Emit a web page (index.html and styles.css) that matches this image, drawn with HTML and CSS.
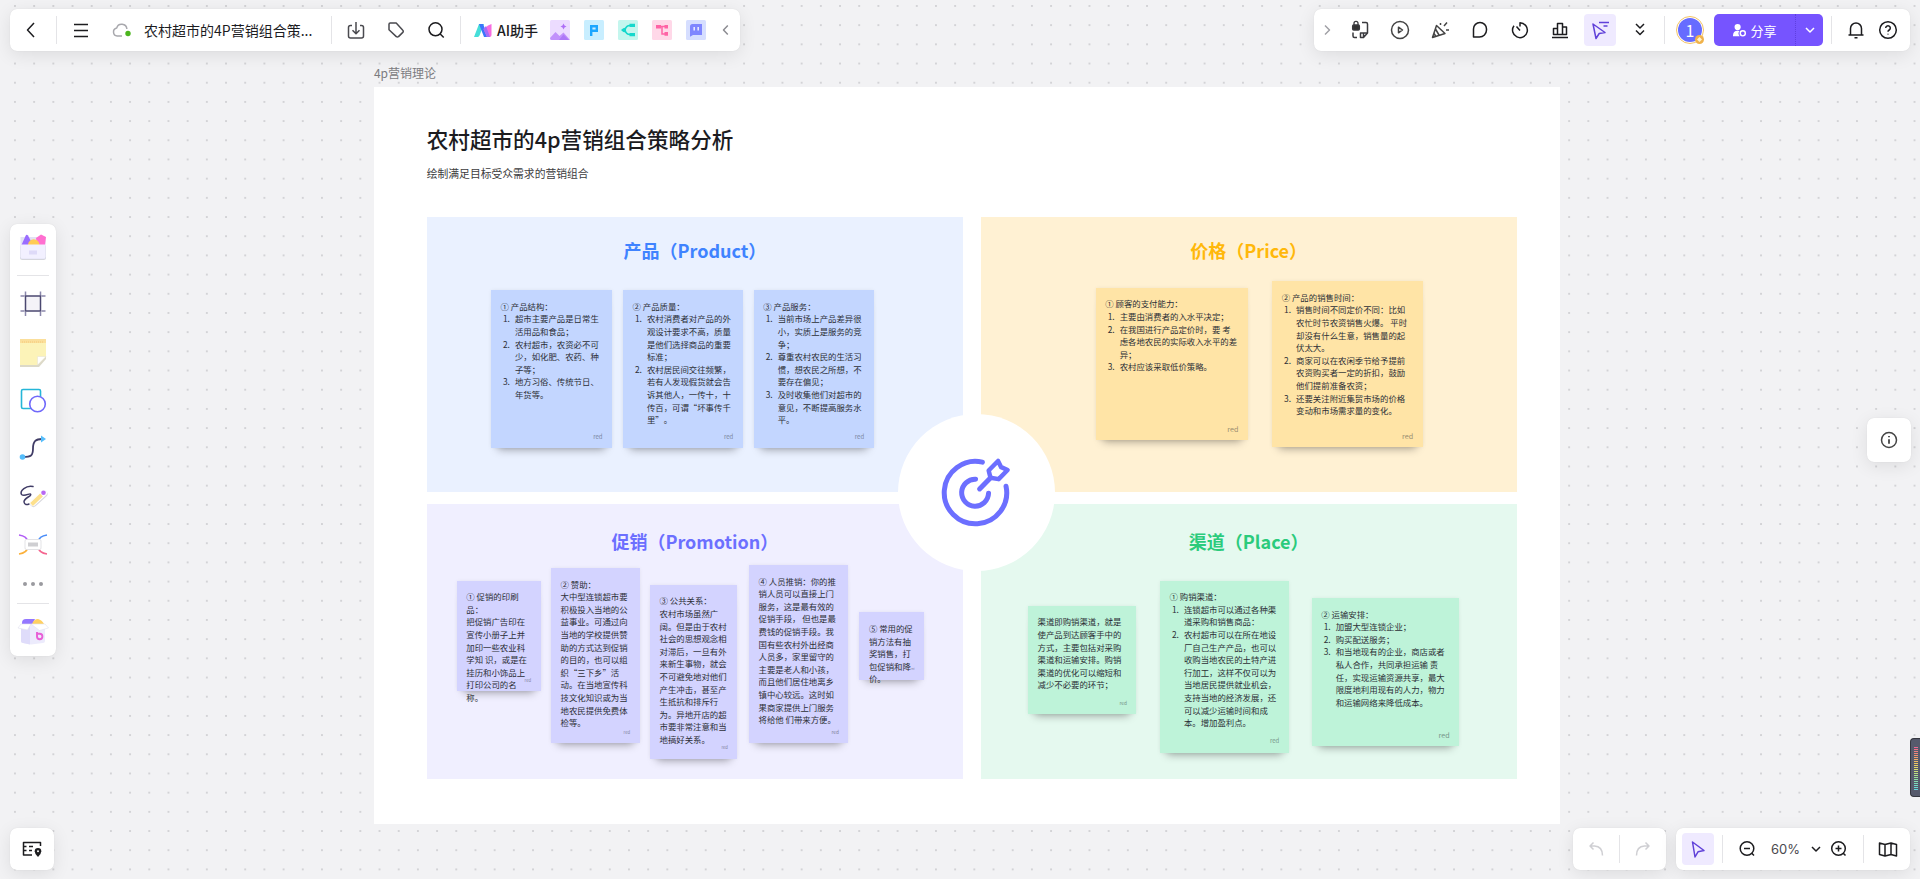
FILE: index.html
```html
<!DOCTYPE html>
<html lang="zh-CN">
<head>
<meta charset="utf-8">
<title>农村超市的4P营销组合策略</title>
<link rel="stylesheet" href="styles.css">
</head>
<body>
<main class="canvas">
  <div class="board">
    <p class="board-label">4p营销理论</p>
    <article class="frame">
      <h1 class="frame-title">农村超市的4p营销组合策略分析</h1>
      <p class="frame-subtitle">绘制满足目标受众需求的营销组合</p>
      <div class="panels">
        <section class="panel product">
          <h2>产品（Product）</h2>
          <div class="note n-product-1">
            <p>① 产品结构：</p>
            <ol><li>超市主要产品是日常生活用品和食品；</li><li>农村超市，农资必不可少，如化肥、农药、种子等；</li><li>地方习俗、传统节日、年货等。</li></ol>
            <span class="author s10">red</span>
          </div>
          <div class="note n-product-2">
            <p>② 产品质量：</p>
            <ol><li>农村消费者对产品的外观设计要求不高，质量是他们选择商品的重要标准；</li><li>农村居民间交往频繁，若有人发现假货就会告诉其他人，一传十，十传百，可谓“坏事传千里”。</li></ol>
            <span class="author s10">red</span>
          </div>
          <div class="note n-product-3">
            <p>③ 产品服务：</p>
            <ol><li>当前市场上产品差异很小，实质上是服务的竞争；</li><li>尊重农村农民的生活习惯，想农民之所想，不要存在偏见；</li><li>及时收集他们对超市的意见，不断提高服务水平。</li></ol>
            <span class="author s10">red</span>
          </div>
        </section>
        <section class="panel price">
          <h2>价格（Price）</h2>
          <div class="note n-price-1">
            <p>① 顾客的支付能力：</p>
            <ol><li>主要由消费者的入水平决定；</li><li>在我国进行产品定价时，要 考虑各地农民的实际收入水平的差异；</li><li>农村应该采取低价策略。</li></ol>
            <span class="author s12">red</span>
          </div>
          <div class="note n-price-2">
            <p>② 产品的销售时间：</p>
            <ol><li>销售时间不同定价不同：比如农忙时节农资销售火爆。 平时却没有什么生意，销售量的起伏太大。</li><li>商家可以在农闲季节给予提前农资购买者一定的折扣，鼓励他们提前准备农资；</li><li>还要关注附近集贸市场的价格变动和市场需求量的变化。</li></ol>
            <span class="author s12">red</span>
          </div>
        </section>
        <section class="panel promotion">
          <h2>促销（Promotion）</h2>
          <div class="note n-promo-1">
            <p>① 促销的印刷品：</p>
            <p>把促销广告印在宣传小册子上并加印一些农业科学知 识，或是在挂历和小饰品上打印公司的名称。</p>
            <span class="author s7">red</span>
          </div>
          <div class="note n-promo-2">
            <p>② 赞助：</p>
            <p>大中型连锁超市要积极投入当地的公益事业。可通过向当地的学校提供赞助的方式达到促销的目的，也可以组织“三下乡”活动。在当地宣传科技文化知识或为当地农民提供免费体检等。</p>
            <span class="author s7">red</span>
          </div>
          <div class="note n-promo-3">
            <p>③ 公共关系：</p>
            <p>农村市场虽然广阔。但是由于农村社会的思想观念相对滞后，一旦有外来新生事物，就会不可避免地对他们产生冲击，甚至产生抵抗和排斥行为。异地开店的超市要非常注意和当地搞好关系。</p>
            <span class="author s7">red</span>
          </div>
          <div class="note n-promo-4">
            <p>④ 人员推销：你的推销人员可以直接上门服务，这是最有效的促销手段， 但也是最费钱的促销手段。我国有些农村外出经商人员多，家里留守的主要是老人和小孩，而且他们居住地离乡镇中心较远。这时如果商家提供上门服务将给他 们带来方便。</p>
            <span class="author s8">red</span>
          </div>
          <div class="note n-promo-5">
            <p>⑤ 常用的促销方法有抽奖销售，打包促销和降价。</p>
            <span class="author s4">red</span>
          </div>
        </section>
        <section class="panel place">
          <h2>渠道（Place）</h2>
          <div class="note n-place-1">
            <p>渠道即购销渠道，就是使产品到达顾客手中的方式，主要包括对采购渠道和运输安排。购销渠道的优化可以缩短和减少不必要的环节；</p>
            <span class="author s8">red</span>
          </div>
          <div class="note n-place-2">
            <p>① 购销渠道：</p>
            <ol><li>连锁超市可以通过各种渠道采购和销售商品：</li><li>农村超市可以在所在地设厂自己生产产品，也可以收购当地农民的土特产进行加工，这样不仅可以为当地居民提供就业机会，支持当地的经济发展，还可以减少运输时间和成本。增加盈利点。</li></ol>
            <span class="author s10">red</span>
          </div>
          <div class="note n-place-3">
            <p>② 运输安排：</p>
            <ol><li>加盟大型连锁企业；</li><li>购买配送服务；</li><li>和当地现有的企业，商店或者私人合作，共同承担运输 责任，实现运输资源共享，最大限度地利用现有的人力，物力和运输网络来降低成本。</li></ol>
            <span class="author s12">red</span>
          </div>
        </section>
        <div class="hub">
          <svg viewBox="0 0 92 92" fill="none" stroke="#6c6fff" stroke-width="5" stroke-linecap="round" stroke-linejoin="round"><path d="M52.500 16.200A31.300 31.300 0 1 0 76.200 40.300"/><path d="M45.700 33.300A13.500 13.500 0 1 0 58.700 47.300"/><path d="M49.700 43L61 31.600"/><path d="M58.800 24.600L68.200 15L71.300 21.200L77.800 24L68.800 33.200L60.600 31.800Z" stroke-width="4.500"/></svg>
        </div>
      </div>
    </article>
  </div>
</main>

<header class="bar bar-file">
  <button class="ib back" aria-label="返回"><svg viewBox="0 0 24 24"><path d="M15 5L8.500 12l6.500 7"/></svg></button>
  <i class="sep"></i>
  <button class="ib menu" aria-label="菜单"><svg viewBox="0 0 24 24"><path d="M5 6.500h14M5 12.500h14M5 18.500h14"/></svg></button>
  <span class="cloud"><svg viewBox="0 0 24 24"><path d="M13 18H8.200a4 4 0 0 1-.5-7.900A5.200 5.200 0 0 1 17.900 11" stroke="#a8a8ad"/><circle cx="19" cy="15.500" r="2.700" fill="#4bb51d" stroke="none"/></svg></span>
  <span class="doc-title">农村超市的4P营销组合策...</span>
  <i class="sep"></i>
  <button class="ib" aria-label="下载"><svg viewBox="0 0 24 24" stroke="#4a4a4f"><path d="M8 7.500H6.500a2 2 0 0 0-2 2V18a2 2 0 0 0 2 2h11a2 2 0 0 0 2-2V9.500a2 2 0 0 0-2-2H16M12 4v11.500M8.500 12.200l3.500 3.500 3.500-3.500"/></svg></button>
  <button class="ib" aria-label="标签"><svg viewBox="0 0 24 24" stroke="#4a4a4f"><path d="M5 6.200Q5 5 6.200 5h6l6.600 7.200a1.500 1.500 0 0 1 0 2.200L14.500 18.600a1.500 1.500 0 0 1-2.200 0L5 11.800Z"/></svg></button>
  <button class="ib search" aria-label="搜索"><svg viewBox="0 0 24 24"><circle cx="11.500" cy="11.300" r="6.500"/><path d="M16.200 16l3.500 3.500"/></svg></button>
  <i class="sep"></i>
  <button class="ai"><svg class="ai-logo" viewBox="0 0 18 13"><path d="M5 0h5L5.500 11.500A2 2 0 0 1 3.700 13H0Z" fill="#46ded9"/><path d="M5 0h4l5.500 13H10Z" fill="#3a76fb"/><path d="M17.500 0v11q0 2-2 2H13L9.500 5 14 1.500Z" fill="#f76ce0"/><path d="M9.500 5l2.500-3L16 13h-3Z" fill="#a36cf8"/></svg><b>AI助手</b></button>
  <div class="ai-tools">
    <button aria-label="AI图片"><svg viewBox="0 0 20 20"><rect width="20" height="20" rx="1.500" fill="#ecdcff"/><path d="M0 18l5.500-6 4 4 4-3.500L20 20H1.500Q0 20 0 18Z" fill="#c191fb"/><path d="M9 20l4.500-5.500L19 20Z" fill="#ad78f7"/><path d="M13.500 3.500l1 2 2 1-2 1-1 2-1-2-2-1 2-1Z" fill="#ae6ff7"/></svg></button>
    <button aria-label="AI演示"><svg viewBox="0 0 20 20"><rect width="20" height="20" rx="1.500" fill="#c8eeff"/><path d="M7.200 16V6.200h5.600v4.600H7.200" fill="none" stroke="#1ba6ff" stroke-width="2.400"/></svg></button>
    <button aria-label="AI思维导图"><svg viewBox="0 0 20 20"><rect width="20" height="20" rx="1.500" fill="#c4f6ee"/><path d="M12 5.500Q8 5.500 7 10q1 4.500 5 4.500" fill="none" stroke="#14d8cc" stroke-width="1.600"/><path d="M3 10q2-2.500 5-2.500v5Q5 12.500 3 10ZM11.500 3.700H17v3.400h-5.500ZM11.500 12.900H17v3.400h-5.500Z" fill="#14d8cc"/></svg></button>
    <button aria-label="AI流程图"><svg viewBox="0 0 20 20"><rect width="20" height="20" rx="1.500" fill="#ffd8e8"/><path d="M6 6.500h8M10 6.500v7.500h4" fill="none" stroke="#ff63a5" stroke-width="1.500"/><path d="M4 5h5v3.500H4ZM12.500 5H16v3.500h-3.500ZM12.500 12H16v3.700h-3.500Z" fill="#ff63a5"/></svg></button>
    <button aria-label="AI对话"><svg viewBox="0 0 20 20"><rect width="20" height="20" rx="1.500" fill="#d6deff"/><path d="M6.500 4H16v11H7l-3 1.800V6.500Q4 4 6.500 4Z" fill="#7f86ff"/><path d="M8.200 7v3.500M12.200 7v3.500" stroke="#eef" stroke-width="1.500"/></svg></button>
  </div>
  <button class="ib fold" aria-label="收起"><svg viewBox="0 0 24 24" stroke="#8c8c92"><path d="M13.800 7.500L9.500 12l4.300 4.500"/></svg></button>
</header>

<nav class="bar bar-actions">
  <button class="ib slim" aria-label="展开"><svg viewBox="0 0 24 24" stroke="#a0a0a6"><path d="M10 7.500l4.500 4.500-4.500 4.500"/></svg></button>
  <button class="ib" aria-label="锁定"><svg viewBox="0 0 24 24" stroke="#3a3a3e"><path d="M5 14.500V18q0 1.500 1.500 1.500H9M14 4.500h4Q19.500 4.500 19.500 6v9l-4 4.500h-3V15h7M15.500 19.500V15"/><path d="M6 7V5.300a2 2 0 0 1 4 0V7" stroke-width="1.300"/><rect x="4.700" y="7" width="6.600" height="5" rx="1" fill="#333"/></svg></button>
  <button class="ib" aria-label="演示"><svg viewBox="0 0 24 24" stroke="#444"><circle cx="12" cy="12" r="8.500"/><path d="M10.500 9.200v5.600l4-2.800Z"/></svg></button>
  <button class="ib" aria-label="庆祝"><svg viewBox="0 0 24 24" stroke="#444"><path d="M8.500 7.500L4.500 19.500l12.500-4ZM7.500 11l3.500 6M6 15.500l2 3M12.500 7V5M16 8l3-3.500M18 12h3"/></svg></button>
  <button class="ib" aria-label="评论"><svg viewBox="0 0 24 24"><path d="M5.500 19V11a6.500 6.500 0 0 1 13 0v1a7 7 0 0 1-7 7Z"/></svg></button>
  <button class="ib" aria-label="计时器"><svg viewBox="0 0 24 24"><path d="M12 8.500V4.800a7.400 7.400 0 1 1-6 3M8.500 8.500l3.500 4"/></svg></button>
  <button class="ib" aria-label="投票"><svg viewBox="0 0 24 24"><path d="M4 19.500h16M5.500 16.500V10.500h4v6ZM9.500 16.500v-11h5v11ZM14.500 16.500V9h4v7.500Z"/></svg></button>
  <button class="ib cursors on" aria-label="光标"><svg viewBox="0 0 24 24"><path d="M5 6l12 8.500-5.800 1L8 20.500ZM11 4.500h10M15.500 8h4"/></svg></button>
  <button class="ib" aria-label="更多"><svg viewBox="0 0 24 24"><path d="M8 6l4 4 4-4M8 12.500l4 4 4-4"/></svg></button>
  <i class="sep"></i>
  <span class="avatar">1<svg viewBox="0 0 8 8"><circle cx="4" cy="4" r="4" fill="#f0b24a"/><path d="M4 1.800L6.200 4 4 6.200 1.800 4Z" fill="#fff3d0"/></svg></span>
  <div class="share">
    <button class="share-main"><svg viewBox="0 0 16 16"><circle cx="6" cy="4.300" r="3.300" fill="#fff"/><path d="M1 14q0-5.800 5-5.800 1.200 0 2 .4A4 4 0 0 0 8.200 14Z" fill="#fff"/><circle cx="11.500" cy="11" r="2.700" fill="none" stroke="#fff" stroke-width="1.500"/></svg>分享</button>
    <button class="share-more" aria-label="分享选项"><svg viewBox="0 0 24 24"><path d="M8 10l4 4 4-4"/></svg></button>
  </div>
  <i class="sep"></i>
  <button class="ib help" aria-label="通知"><svg viewBox="0 0 24 24"><path d="M4.500 17h15M6.500 17V10.500a5.500 5.500 0 0 1 11 0V17M10.500 19.800h3"/></svg></button>
  <button class="ib help" aria-label="帮助"><svg viewBox="0 0 24 24"><circle cx="12" cy="12" r="8.300"/><path d="M9.700 10a2.300 2.300 0 1 1 3.500 2q-1.200.7-1.200 1.700M12 15.800v.6"/></svg></button>
</nav>

<aside class="bar rail">
  <button class="tool" aria-label="模板"><svg viewBox="0 0 32 32"><rect x="3" y="12.500" width="26" height="15.500" rx="2.500" fill="#d5d6dc"/><path d="M3.500 5h25v21q0 1-1 1h-23q-1 0-1-1Z" fill="#e2e2f4"/><path d="M4.500 13L8.500 4q1-2 2.500-.5L16 13Z" fill="#9a6dff"/><path d="M19 6l5-3.500 5 2.500-1 8h-8Z" fill="#ff6fd0"/><path d="M11 13a5.700 5.700 0 0 1 11.500 0Z" fill="#ffcb54"/><path d="M3.500 12.500h25v12q0 2-2 2h-21q-2 0-2-2Z" fill="#f2f0ff"/><rect x="12" y="18.500" width="8" height="4" fill="#dedaf8"/></svg></button>
  <i class="rule"></i>
  <button class="tool" aria-label="画框"><svg viewBox="0 0 32 32" fill="none" stroke="#8a87ab" stroke-width="1.500"><path d="M8.500 3.500v4M23.500 3.500v4M8.500 24v4M23.500 24v4M3.500 8h4M3.500 23h4M24.500 8h4M24.500 23h4"/><rect x="8.500" y="8" width="15" height="15" fill="#f4f3f8" stroke="#4b4870"/></svg></button>
  <button class="tool" aria-label="便签"><svg viewBox="0 0 32 32"><path d="M3 4h26v19l-7 8H3Z" fill="#dcd9c8"/><path d="M3 3h26v17l-8.500 9H3Z" fill="#fcf3b8"/><path d="M3 3h26v4H3Z" fill="#fbdf9b"/><path d="M5 6h22" stroke="#f3c978" stroke-width="1" stroke-dasharray="1 1"/><path d="M20.500 29v-8.500H29Z" fill="#fff" stroke="#e5e1cf" stroke-width=".5"/></svg></button>
  <button class="tool" aria-label="形状"><svg viewBox="0 0 32 32" stroke-width="1.600"><rect x="4.500" y="5.500" width="19" height="19" rx="1.500" fill="#fff" stroke="#25b6d8"/><circle cx="20.500" cy="20" r="7.800" fill="#fff" stroke="#7068fa"/></svg></button>
  <button class="tool" aria-label="连线"><svg viewBox="0 0 32 32"><path d="M6 25c8 0 10-1 10-8.500S19 7 25 7" fill="none" stroke="#403c66" stroke-width="1.800"/><circle cx="5.500" cy="25" r="2.800" fill="#55bdfb"/><path d="M24 3.500L29 7l-5 3.500Z" fill="#55bdfb"/></svg></button>
  <button class="tool" aria-label="画笔"><svg viewBox="0 0 32 32" fill="none"><path d="M16 6.500C9 5 2.500 11 4.500 14.500c3 2.500 8-1.500 9-.5 2 2-7 4-6.500 8 .5 3 3 3 5 2" stroke="#403c66" stroke-width="1.500" stroke-linecap="round"/><path d="M16.500 23.500L27 14" stroke="#d9d9de" stroke-width="7" stroke-linecap="round"/><path d="M16 23L27 13" stroke="#fff" stroke-width="6" stroke-linecap="round"/><path d="M14.500 24.500L24.500 15" stroke="#fde08c" stroke-width="4"/><circle cx="26.500" cy="12.800" r="2.300" fill="#b868f2"/></svg></button>
  <button class="tool" aria-label="思维导图"><svg viewBox="0 0 32 32" fill="none" stroke-width="1.600"><path d="M2 7q8 1 9 7" stroke="#b15cf5"/><path d="M30 7q-8 1-9 7" stroke="#4a8df8"/><path d="M2 26q8-1 9-7" stroke="#fbb03a"/><path d="M30 26q-8-1-9-7" stroke="#f4658f"/><rect x="8" y="11.500" width="16" height="10" rx="1.500" fill="#fff" stroke="#e3e3e6" stroke-width="1"/><rect x="11" y="14.500" width="10" height="4" fill="#cfcfd2"/></svg></button>
  <button class="tool short" aria-label="更多工具"><svg viewBox="0 0 32 32" fill="#9a9a9f"><circle cx="8" cy="16" r="2"/><circle cx="16" cy="16" r="2"/><circle cx="24" cy="16" r="2"/></svg></button>
  <i class="rule"></i>
  <button class="tool" aria-label="应用"><svg viewBox="0 0 32 32"><path d="M5 7q0-4 4-4h9l-3 6H5Z" fill="#9477ff"/><path d="M15 8q2-5 6-5 4 1 6 5Z" fill="#ffd061"/><path d="M4 8h24v17q0 2-2 2L14 28.500 6 27q-2 0-2-2Z" fill="#ecebfc"/><path d="M4 11l9-3v20.500L6 27q-2 0-2-2Z" fill="#dfdcfa"/><path d="M4 8h10l-3.500 6L1 12Z" fill="#fff" stroke="#e0e0ee" stroke-width=".6"/><path d="M14 8h14l3.500 4-9 2.500Z" fill="#fff" stroke="#e0e0ee" stroke-width=".6"/><path d="M20 16v4.500a2.700 2.700 0 1 0 2.700-2.700H20" fill="none" stroke="#e85fd6" stroke-width="1.900"/></svg></button>
</aside>

<div class="bar bar-map"><button class="ib" aria-label="导航"><svg viewBox="0 0 24 24"><path d="M12 18H3.500V5.500h17V9M3.500 9.500h3M3.500 13.500h3M9 9.500h4M9 13.500h3"/><path d="M18 11a3.300 3.300 0 0 1 3.300 3.300Q21.300 17 18 20q-3.300-3-3.300-5.700A3.300 3.300 0 0 1 18 11Z" fill="#1c1c1f" stroke="none"/><circle cx="18" cy="14.300" r="1" fill="#fff" stroke="none"/></svg></button></div>

<div class="bar bar-info"><button class="ib" aria-label="信息"><svg viewBox="0 0 24 24" stroke="#444"><circle cx="12" cy="12" r="7.500"/><path d="M12 11.200v4.600M12 8v1.300" stroke-width="1.800"/></svg></button></div>

<div class="bottom-right">
  <div class="bar history">
    <button class="ib" aria-label="撤销"><svg viewBox="0 0 24 24" stroke="#cfcfd3"><path d="M9.500 5.500L6 9l3.500 3.500M6 9h4.500q8 .5 8 9.500"/></svg></button>
    <i class="sep"></i>
    <button class="ib" aria-label="重做"><svg viewBox="0 0 24 24" stroke="#cfcfd3"><path d="M14.500 5.500L18 9l-3.500 3.500M18 9h-4.500q-8 .5-8 9.500"/></svg></button>
  </div>
  <div class="bar zoombar">
    <button class="ib on" aria-label="选择"><svg viewBox="0 0 24 24"><path d="M6.500 5l11.500 8.500-6 1.300-3 5.200Z"/></svg></button>
    <i class="sep"></i>
    <button class="ib" aria-label="缩小"><svg viewBox="0 0 24 24"><circle cx="12" cy="11.500" r="6.800"/><path d="M9 11.500h6M16.500 16l2.500 2.500"/></svg></button>
    <button class="percent">60%<svg viewBox="0 0 24 24"><path d="M8 10l4 4 4-4"/></svg></button>
    <button class="ib" aria-label="放大"><svg viewBox="0 0 24 24"><circle cx="11.500" cy="11.500" r="6.800"/><path d="M8.500 11.500h6M11.500 8.500v6M16 16l2.500 2.500"/></svg></button>
    <i class="sep"></i>
    <button class="ib" aria-label="小地图"><svg viewBox="0 0 24 24"><path d="M3.500 6l5.500 1.500L15 6l5.500 1.500V19L15 17.500 9 19 3.500 17.500ZM9 7.500V19M15 6v11.500"/></svg></button>
  </div>
</div>
<div class="meter"><i></i></div>
</body>
</html>
```
FILE: styles.css
```css
:root {
  --ink: #1c1c1f;
  --accent: #7654ff;
  --zoom: 0.6;
}
* { box-sizing: border-box; }
html, body { height: 100%; }
body {
  margin: 0;
  overflow: hidden;
  position: relative;
  font-family: "Noto Sans CJK SC", "Noto Sans", sans-serif;
  font-size: 14px;
  color: var(--ink);
  background: #f2f2f4;
}
h1, h2, p, ol { margin: 0; padding: 0; font-weight: 400; }
button { border: 0; padding: 0; margin: 0; background: none; font: inherit; color: inherit; cursor: pointer; }
svg { display: block; }

/* canvas */
.canvas {
  height: 100%;
  overflow: hidden;
  display: flex;
  justify-content: center;
  align-items: flex-start;
  padding: 64px 0 0 14px;
  text-spacing-trim: space-all;
  --cell: calc(32px * var(--zoom));
  background-image: conic-gradient(from 270deg at 2px 2px, #d3d3d6 90deg, transparent 0);
  background-size: var(--cell) var(--cell);
  background-position: 14px 5px;
}
.board { zoom: 0.6; flex: none; }
.board-label { font-size: 20px; line-height: 30px; color: #7b7b80; margin-bottom: 8px; }
.frame { width: 1977px; background: #fff; padding: 61px 72px 75px 88px; }
.frame-title { font-size: 36px; line-height: 54px; font-weight: 500; }
.frame-subtitle { font-size: 18px; line-height: 27px; margin-top: 15px; color: #3c3c40; }
.panels {
  position: relative;
  margin-top: 60px;
  display: grid;
  grid-template-columns: 1fr 1fr;
  grid-auto-rows: 458px;
  gap: 20px 29px;
}
.panel { position: relative; padding-top: 34px; text-align: center; }
.panel h2 { font-size: 30px; line-height: 45px; font-weight: 700; }
.product { background: #eaf1ff; }
.price { background: #fff1d3; }
.promotion { background: #f0efff; padding-top: 41px; }
.place { background: #e5f9ef; padding-top: 41px; }
.product h2 { color: #3f83ff; }
.price h2 { color: #ffb80a; }
.promotion h2 { color: #6c6fff; }
.place h2 { color: #2bcb7c; }

.note {
  position: absolute;
  padding: 16px;
  font-size: 14px;
  line-height: 21px;
  text-align: left;
  color: #2c2f36;
  box-shadow: 0 0 6px rgba(0, 0, 0, .06), 0 16px 14px -12px rgba(0, 0, 0, .34);
}
.product .note { background: #c3d6ff; }
.price .note { background: #ffe4a6; }
.promotion .note { background: #d3d3ff; }
.place .note { background: #bef3d9; }
.note ol { list-style: none; padding-left: 24px; counter-reset: item; }
.note li { counter-increment: item; }
.note li::before { content: counter(item) "."; float: left; margin-left: -20px; }
.author { position: absolute; right: 16px; bottom: 8px; opacity: .5; }
.s4 { font-size: 4px; }
.s7 { font-size: 7px; }
.s8 { font-size: 8px; }
.s10 { font-size: 10px; }
.s12 { font-size: 12px; }

.n-product-1 { left: 107px; top: 122px; width: 202px; height: 263px; }
.n-product-2 { left: 327px; top: 122px; width: 200px; height: 263px; }
.n-product-3 { left: 545px; top: 122px; width: 200px; height: 263px; }
.n-price-1 { left: 192px; top: 118px; width: 254px; height: 254px; }
.n-price-2 { left: 486px; top: 107px; width: 251px; height: 277px; }
.n-promo-1 { left: 50px; top: 128px; width: 140px; height: 184px; }
.n-promo-2 { left: 207px; top: 107px; width: 148px; height: 292px; }
.n-promo-3 { left: 372px; top: 135px; width: 146px; height: 290px; }
.n-promo-4 { left: 537px; top: 102px; width: 166px; height: 297px; }
.n-promo-5 { left: 721px; top: 181px; width: 108px; height: 113px; }
.n-place-1 { left: 79px; top: 170px; width: 181px; height: 181px; }
.n-place-2 { left: 299px; top: 128px; width: 215px; height: 287px; }
.n-place-3 { left: 552px; top: 157px; width: 246px; height: 247px; }

.hub {
  position: absolute;
  left: 785px;
  top: 328px;
  width: 262px;
  height: 262px;
  border-radius: 50%;
  background: #fff;
  display: grid;
  place-items: center;
}
.hub svg { width: 153px; height: 153px; }

/* floating bars */
.bar {
  background: #fff;
  border-radius: 7px;
  box-shadow: 0 0 1px rgba(0, 0, 0, .12), 0 4px 18px rgba(0, 0, 0, .09);
  display: flex;
  align-items: center;
}
.bar-file, .bar-actions, .rail, .bar-map, .bar-info, .bottom-right, .meter { position: absolute; }
.sep { width: 1px; height: 28px; background: #e4e4e7; flex: none; }
.ib { width: 40px; height: 32px; display: grid; place-items: center; border-radius: 4px; flex: none; }
.ib svg, .cloud svg, .percent svg, .share-more svg {
  width: 24px;
  height: 24px;
  fill: none;
  stroke-width: 1.5;
  stroke-linejoin: round;
}
.ib svg:not([stroke]), .cloud svg, .percent svg { stroke: var(--ink); }
.on { background: #efeaff; width: 32px; }
.ib.on svg { stroke: #6041d9; }

.bar-file { left: 10px; top: 9px; height: 42px; padding-left: 1px; }
.back { margin-right: 5px; }
.menu { width: 48px; }
.cloud { width: 32px; display: grid; place-items: center; }
.doc-title { margin: 0 17px 0 7px; width: 170px; line-height: 21px; white-space: nowrap; }
.bar-file .sep ~ .sep + .ib { margin-left: 4px; }
.search { margin-right: 4px; }
.ai { display: flex; align-items: center; gap: 5px; margin-left: 13px; line-height: 21px; }
.ai-logo { width: 18px; height: 13px; }
.ai b { font-weight: 500; width: 40px; white-space: nowrap; }
.ai-tools { display: flex; gap: 14px; margin: 0 6px 0 13px; }
.ai-tools button, .ai-tools svg { width: 20px; height: 20px; }
.fold { width: 28px; }

.bar-actions { right: 10px; top: 9px; height: 42px; padding-right: 6px; }
.slim { width: 26px; }
.cursors { margin: 0 4px; }
.bar-actions .sep { margin: 0 8px 0 4px; }
.avatar {
  position: relative;
  width: 28px;
  height: 28px;
  margin: 0 10px 0 3px;
  border-radius: 50%;
  border: 1px solid #f5c465;
  background: #666cff content-box;
  padding: 1px;
  color: #fff;
  font-size: 16px;
  line-height: 24px;
  text-align: center;
}
.avatar svg { position: absolute; right: -1px; bottom: -1px; width: 9px; height: 9px; }
.share { display: flex; height: 32px; border-radius: 5px; background: var(--accent); color: #fff; overflow: hidden; margin-right: 4px; }
.share-main { width: 81px; display: flex; align-items: center; justify-content: center; gap: 3px; font-size: 13px; }
.share-main svg { width: 15px; height: 15px; }
.share-more { width: 28px; display: grid; place-items: center; border-left: 1px dotted #5f3fe0; }
.share-more svg { stroke: #fff; }
.help { width: 32px; }

.rail { left: 10px; top: 224px; width: 46px; flex-direction: column; }
.tool { width: 46px; height: 48px; display: grid; place-items: center; }
.tool svg { width: 32px; height: 32px; }
.rule { width: 32px; height: 1px; background: #e4e4e7; margin: 3px 0 4px; }
.short { height: 32px; }

.bar-map { left: 10px; bottom: 9px; width: 44px; height: 42px; justify-content: center; }
.bar-info { right: 9px; top: 418px; width: 44px; height: 44px; justify-content: center; }
.bottom-right { right: 10px; bottom: 9px; display: flex; gap: 10px; }
.history { height: 42px; padding: 0 3px; }
.history .sep { margin: 0 3px; }
.zoombar { height: 42px; padding: 0 2px 0 6px; }
.zoombar .sep { margin: 0 4px 0 8px; }
.zoombar .sep ~ .sep { margin: 0 4px; }
.percent { display: flex; align-items: center; gap: 4px; padding-left: 4px; color: #4a4a4f; font-family: Inter, sans-serif; font-size: 13px; width: 52px; }
.percent svg { flex: none; }

.meter {
  right: 0;
  top: 738px;
  width: 10px;
  height: 59px;
  padding: 7px 2px 6px 3px;
  border: 1px solid #35373f;
  border-right: 0;
  border-radius: 4px 0 0 4px;
  background: #565a6c;
}
.meter i {
  display: block;
  width: 4px;
  height: 100%;
  background:
    repeating-linear-gradient(#565a6c 0 1px, transparent 1px 2px),
    linear-gradient(#f0609a, #f09070 20%, #f0c860 40%, #d8e070 55%, #90e0a0 75%, #60d8e0);
}
```
